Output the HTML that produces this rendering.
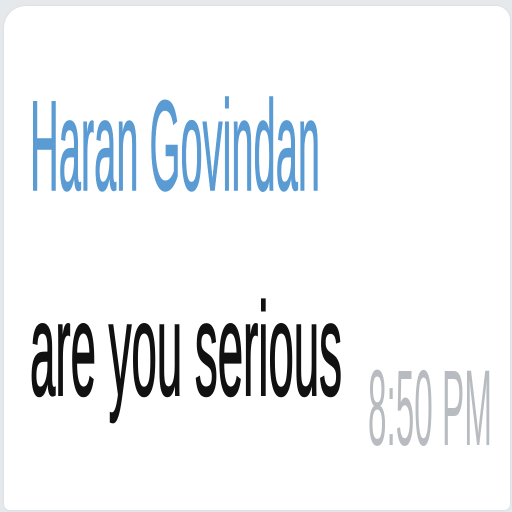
<!DOCTYPE html>
<html><head><style>
html,body{margin:0;padding:0;width:512px;height:512px;overflow:hidden;background:#e6e9ec;}
.b{position:absolute;left:4px;top:6px;width:506px;height:504px;background:#fff;border-radius:22px 14px 6px 6px;box-shadow:0 0 2px #cfd4d9;}
svg{position:absolute;left:0;top:0}
</style></head><body>
<div class="b"></div>
<svg width="512" height="512" viewBox="0 0 512 512">
<text x="30" y="190" font-family="Liberation Sans, sans-serif" font-size="128" fill="#5a9bd3" stroke="#5a9bd3" stroke-width="1.5" textLength="290" lengthAdjust="spacingAndGlyphs">Haran Govindan</text>
<text x="30" y="395" font-family="Liberation Sans, sans-serif" font-size="132" fill="#111" stroke="#111" stroke-width="2" textLength="312" lengthAdjust="spacingAndGlyphs">are you serious</text>
<text x="368" y="445" font-family="Liberation Sans, sans-serif" font-size="108" fill="#b8bcc0" textLength="124" lengthAdjust="spacingAndGlyphs">8:50 PM</text>
</svg>
</body></html>
